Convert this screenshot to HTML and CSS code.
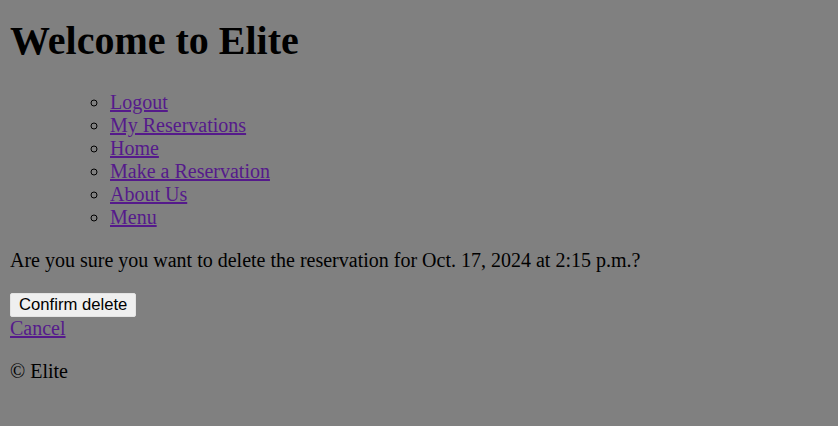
FILE: index.html
```html
<!DOCTYPE html>
<html>
<head>
<meta charset="utf-8">
<title>Elite</title>
<link rel="stylesheet" href="styles.css">
</head>
<body>
<h1 class="title">Welcome to Elite</h1>
<ul class="nav">
  <ul class="nav-inner">
    <li><a href="#">Logout</a></li>
    <li><a href="#">My Reservations</a></li>
    <li><a href="#">Home</a></li>
    <li><a href="#">Make a Reservation</a></li>
    <li><a href="#">About Us</a></li>
    <li><a href="#">Menu</a></li>
  </ul>
</ul>
<p class="question">Are you sure you want to delete the reservation for Oct. 17, 2024 at 2:15 p.m.?</p>
<form class="form">
  <button type="button" class="btn">Confirm delete</button>
</form>
<a href="#" class="cancel">Cancel</a>
<p class="footer">&copy; Elite</p>
</body>
</html>
```

FILE: styles.css
```css
html {
  background: #808080;
}
body {
  margin: 17px 10px 10px;
  font-family: "Liberation Serif", "Times New Roman", serif;
  font-size: 20px;
  color: #000;
  background: #808080;
}
.title {
  font-size: 40px;
  font-weight: bold;
  margin: 0 0 26.8px;
}
.nav {
  margin: 20px 0;
  padding-left: 50px;
  list-style: disc;
}
.nav-inner {
  margin: 0;
  padding-left: 50px;
  list-style: circle;
}
a {
  color: #551a8b;
}
.question {
  margin: 20px 0;
}
.form {
  margin: 0;
}
.btn {
  font-family: "Liberation Sans", Arial, sans-serif;
  font-size: 16.67px;
  line-height: 20px;
  padding: 1px 8px;
  background: #efefef;
  color: #000;
  border: 1px solid #e3e3e3;
  border-radius: 2px;
}
.footer {
  margin: 20px 0;
}
```
